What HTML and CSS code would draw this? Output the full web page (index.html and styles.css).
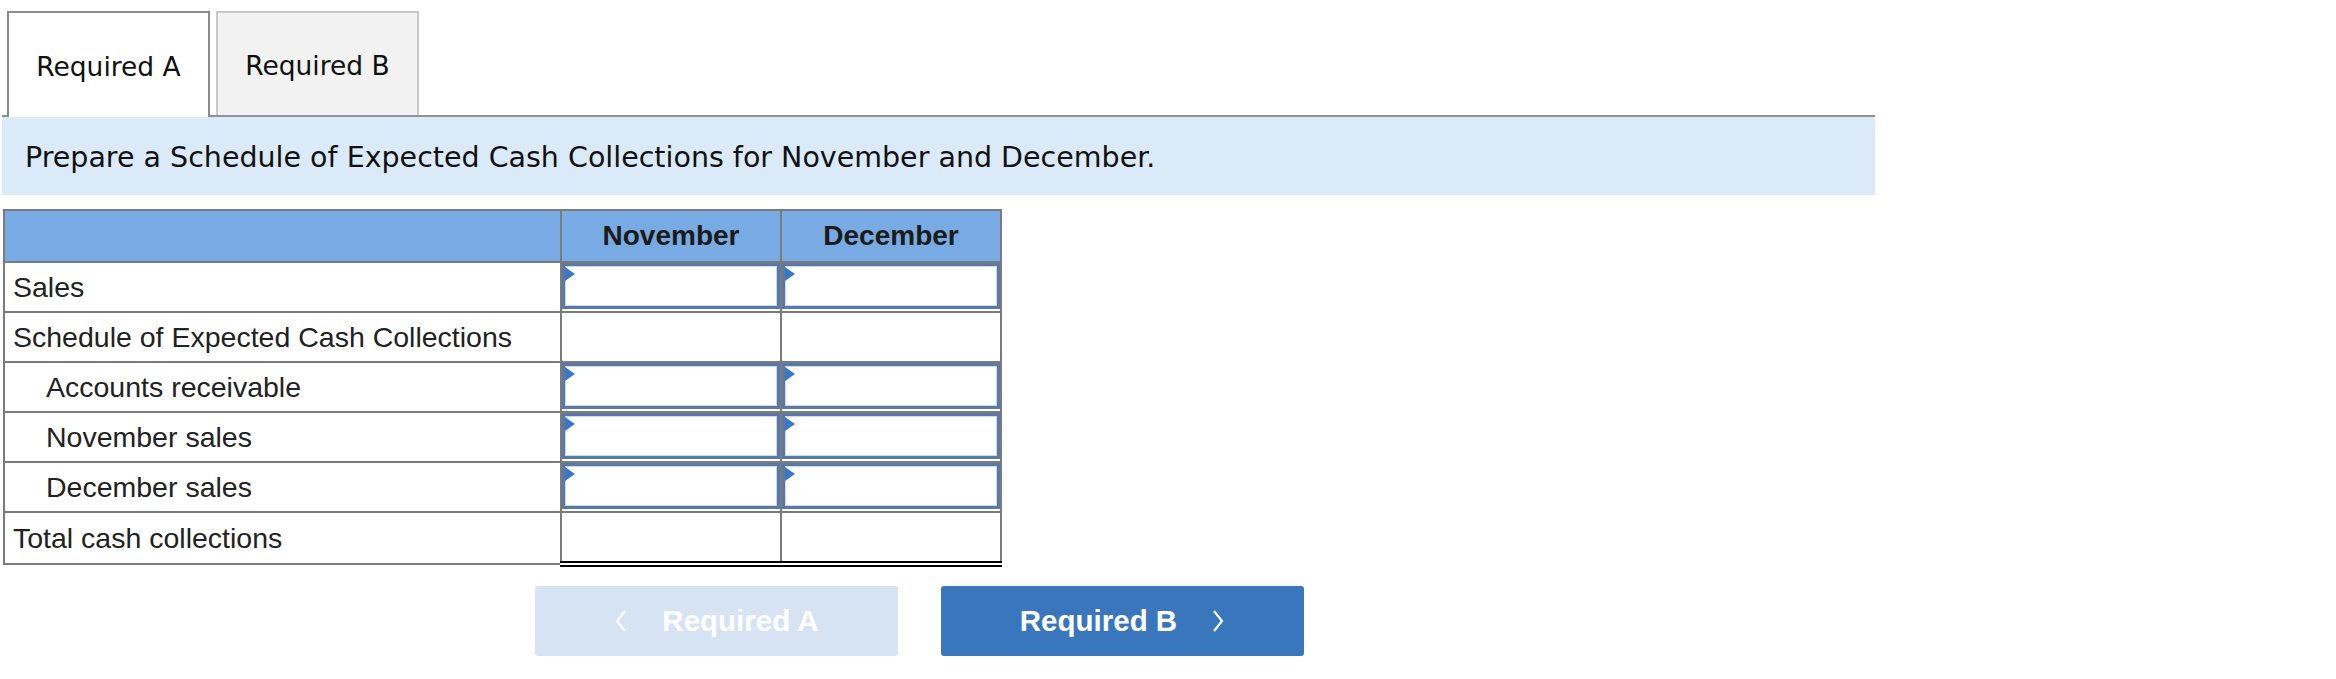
FILE: index.html
```html
<!DOCTYPE html>
<html>
<head>
<meta charset="utf-8">
<link rel="stylesheet" href="styles.css">
</head>
<body>
<div class="page">
  <div class="tabbar">
    <div class="tab active">Required A</div>
    <div class="tab">Required B</div>
  </div>
  <div class="instr">Prepare a Schedule of Expected Cash Collections for November and December.</div>
  <table class="sched">
    <colgroup><col class="c-label"><col class="c-num"><col class="c-num"></colgroup>
    <thead>
      <tr><th></th><th>November</th><th>December</th></tr>
    </thead>
    <tbody>
      <tr><td class="lbl">Sales</td><td class="in"><div class="inp"></div></td><td class="in"><div class="inp"></div></td></tr>
      <tr><td class="lbl">Schedule of Expected Cash Collections</td><td></td><td></td></tr>
      <tr><td class="lbl ind">Accounts receivable</td><td class="in"><div class="inp"></div></td><td class="in"><div class="inp"></div></td></tr>
      <tr><td class="lbl ind">November sales</td><td class="in"><div class="inp"></div></td><td class="in"><div class="inp"></div></td></tr>
      <tr><td class="lbl ind">December sales</td><td class="in"><div class="inp"></div></td><td class="in"><div class="inp"></div></td></tr>
      <tr class="total"><td class="lbl">Total cash collections</td><td class="tot"></td><td class="tot"></td></tr>
    </tbody>
  </table>
  <div class="nav">
    <button class="btn prev"><svg class="chev" width="14" height="24" viewBox="0 0 14 24"><polyline points="11,2 3,12 11,22" fill="none" stroke="#fff" stroke-width="2.2"/></svg><span>Required A</span></button>
    <button class="btn next"><span>Required B</span><svg class="chev" width="14" height="24" viewBox="0 0 14 24"><polyline points="3,2 11,12 3,22" fill="none" stroke="#fff" stroke-width="2.2"/></svg></button>
  </div>
</div>
</body>
</html>
```

FILE: styles.css
```css
html, body {
  margin: 0;
  padding: 0;
  background: #ffffff;
}

.page {
  padding-top: 11px;
}

.tabbar {
  display: flex;
  gap: 6px;
  margin-left: 2px;
  width: 1873px;
  padding-left: 5px;
  box-sizing: border-box;
  border-bottom: 2px solid #8e9399;
  height: 106px;
  align-items: flex-start;
}

.tab {
  width: 203px;
  height: 104px;
  box-sizing: border-box;
  display: flex;
  align-items: center;
  justify-content: center;
  font-family: "DejaVu Sans", Verdana, sans-serif;
  font-size: 26.5px;
  color: #111;
  background: #f2f2f2;
  border: 2px solid #c8c8c8;
  border-bottom: none;
  padding-top: 2px;
}

.tab.active {
  background: #ffffff;
  border-color: #8c8c8c;
  height: 106px;
  position: relative;
  z-index: 1;
}

.instr {
  margin-left: 2px;
  width: 1873px;
  height: 78px;
  box-sizing: border-box;
  background: #dbeaf9;
  display: flex;
  align-items: center;
  padding-left: 23px;
  padding-top: 2px;
  font-family: "DejaVu Sans", Verdana, sans-serif;
  font-size: 28.5px;
  color: #111;
}

.sched {
  margin-top: 14px;
  margin-left: 3px;
  border-collapse: collapse;
  font-family: "Liberation Sans", Arial, sans-serif;
  font-size: 28.5px;
  color: #222;
  table-layout: fixed;
}

.c-label { width: 557px; }
.c-num { width: 220px; }

.sched th,
.sched td {
  border: 2px solid #7b7b7b;
  padding: 0;
}

.sched th {
  background: #78abe3;
  height: 50px;
  font-weight: bold;
  font-size: 28px;
  color: #1b1b1b;
  text-align: center;
}

.sched td {
  height: 48px;
}

.lbl {
  padding-left: 8px !important;
  white-space: nowrap;
}

.lbl.ind {
  padding-left: 41px !important;
}

.in {
  vertical-align: top;
}

.inp {
  position: relative;
  height: 46px;
  box-sizing: border-box;
  border: 3px solid #5a79a6;
  box-shadow: inset 0 0 0 1px #c3dbf6;
  background: #ffffff;
}

.inp::before {
  content: "";
  position: absolute;
  left: 0;
  top: 1px;
  width: 0;
  height: 0;
  border-top: 7px solid transparent;
  border-bottom: 7px solid transparent;
  border-left: 10px solid #3b78c4;
}

.total .tot {
  border-top: 2px solid #111;
  border-bottom: 6px double #000;
}

.nav {
  display: flex;
  gap: 43px;
  margin-left: 535px;
  margin-top: 19px;
}

.btn {
  width: 363px;
  height: 70px;
  border: none;
  border-radius: 3px;
  display: flex;
  align-items: center;
  justify-content: center;
  gap: 34px;
  font-family: "Liberation Sans", Arial, sans-serif;
  font-weight: bold;
  font-size: 29.5px;
  color: #ffffff;
  padding: 0;
}

.btn.prev {
  background: #d6e3f2;
}

.btn.next {
  background: #3a76bc;
}

.chev {
  display: block;
}
```
